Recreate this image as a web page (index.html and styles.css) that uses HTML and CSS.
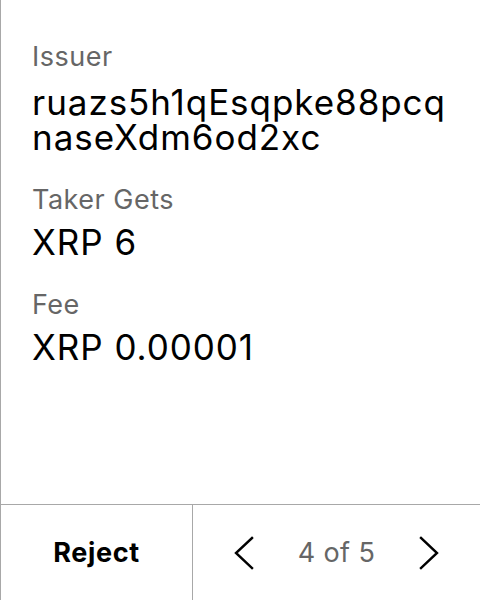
FILE: index.html
```html
<!DOCTYPE html>
<html>
<head>
<meta charset="utf-8">
<link rel="stylesheet" href="styles.css">
</head>
<body>
<div class="screen">
  <main class="details">
    <div class="field">
      <div class="label">Issuer</div>
      <div class="value">ruazs5h1qEsqpke88pcq<br>naseXdm6od2xc</div>
    </div>
    <div class="field">
      <div class="label">Taker Gets</div>
      <div class="value">XRP 6</div>
    </div>
    <div class="field">
      <div class="label">Fee</div>
      <div class="value">XRP 0.00001</div>
    </div>
  </main>
  <footer class="footer">
    <div class="reject">Reject</div>
    <div class="pager">
      <svg class="chev" width="24" height="34" viewBox="0 0 24 34"><polyline points="19,2 3,17 19,32" fill="none" stroke="#000" stroke-width="2.4" stroke-linecap="square"/></svg>
      <span class="count">4 of 5</span>
      <svg class="chev" width="24" height="34" viewBox="0 0 24 34"><polyline points="5,2 21,17 5,32" fill="none" stroke="#000" stroke-width="2.4" stroke-linecap="square"/></svg>
    </div>
  </footer>
</div>
</body>
</html>
```
FILE: styles.css
```css
html, body {
  margin: 0;
  padding: 0;
  background: #fff;
}
.screen {
  width: 480px;
  height: 600px;
  box-sizing: border-box;
  border-left: 1px solid #a8a8a8;
  display: flex;
  flex-direction: column;
  font-family: Inter, "Noto Sans", sans-serif;
}
.details {
  height: 504px;
  box-sizing: border-box;
  padding: 41px 0 0 31px;
  display: flex;
  flex-direction: column;
  gap: 29px;
}
.field {
  display: flex;
  flex-direction: column;
  gap: 12px;
}
.field + .field {
  gap: 9px;
}
.label {
  font-size: 27px;
  line-height: 32px;
  letter-spacing: 0.5px;
  color: #666;
}
.value {
  font-size: 35px;
  line-height: 35px;
  letter-spacing: 0.95px;
  color: #000;
}
.footer {
  height: 96px;
  box-sizing: border-box;
  border-top: 1px solid #a8a8a8;
  display: flex;
}
.reject {
  width: 191px;
  border-right: 1px solid #a8a8a8;
  display: flex;
  align-items: center;
  justify-content: center;
  font-size: 27px;
  font-weight: 700;
  letter-spacing: 0.6px;
  color: #000;
}
.pager {
  flex: 1;
  display: flex;
  align-items: center;
  justify-content: center;
  gap: 41px;
}
.count {
  font-size: 27px;
  letter-spacing: 0.4px;
  color: #666;
}
.chev {
  display: block;
}
```
